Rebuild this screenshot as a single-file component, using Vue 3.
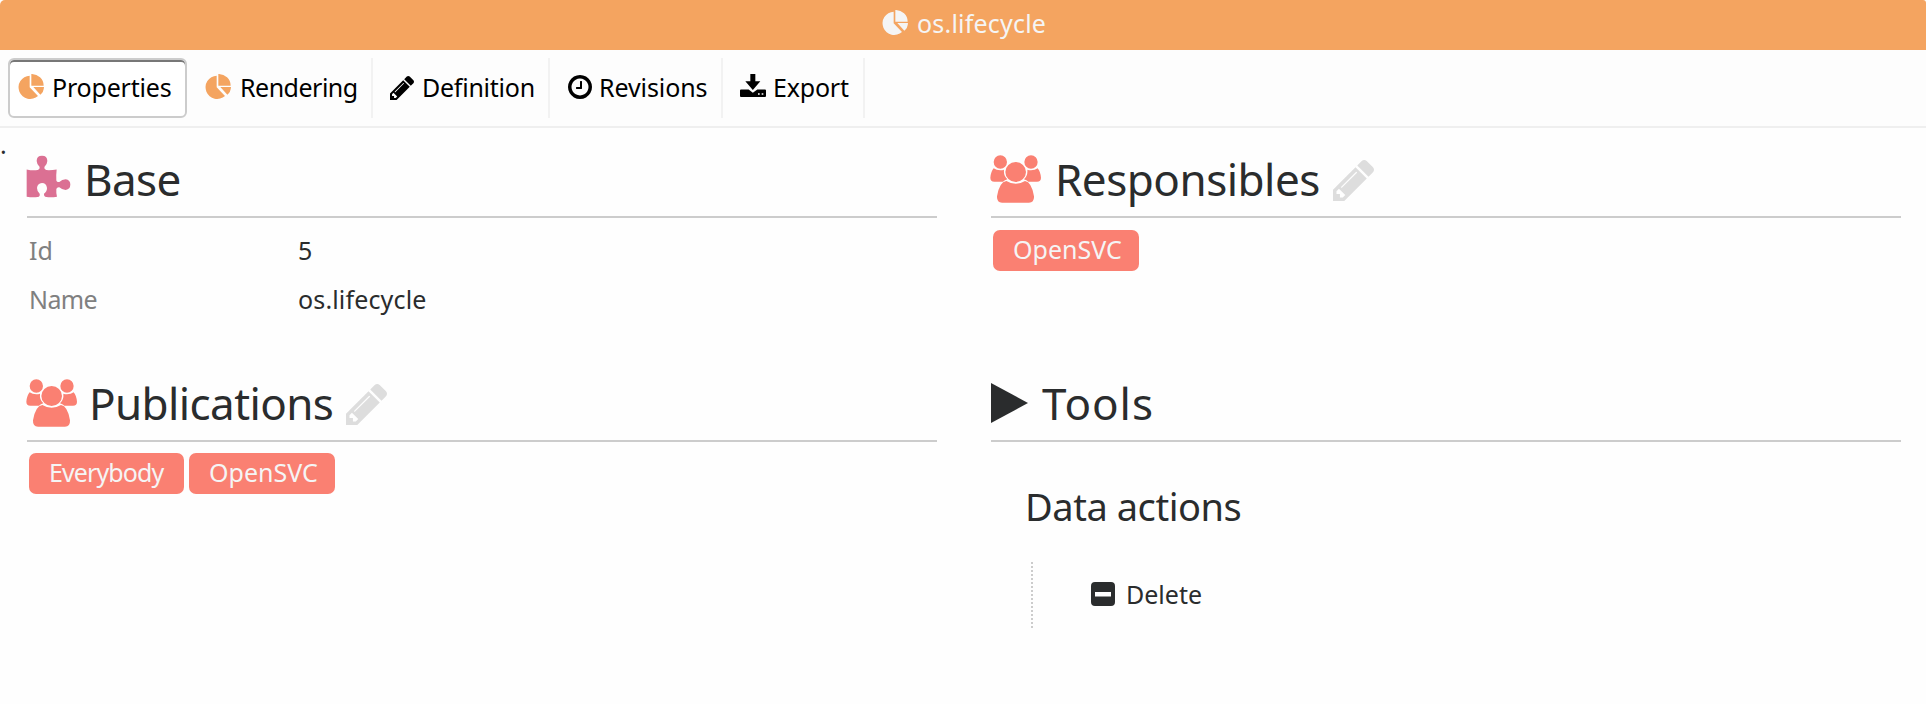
<script setup>
import { h } from 'vue'

const shapes = {
  pie: {
    box: '0 0 78 75',
    d: 'M35 5V40L60 66A35 35 0 1 1 35 5ZM40 0A36 35 0 0 1 77 35H40ZM46 39H78Q77 55 67 62Z',
  },
  pencil: {
    box: '128 149 1515 1515',
    d: 'M491 1536l91-91-235-235-91 91v107h128v128h107zm523-928q0-22-22-22-10 0-17 7l-542 542q-7 7-7 17 0 22 22 22 10 0 17-7l542-542q7-7 7-17zm-54-192l416 416-832 832h-416v-416zm683 96q0 53-37 90l-166 166-416-416 166-165q36-38 90-38 53 0 91 38l235 234q37 39 37 91z',
  },
  clock: {
    box: '128 128 1536 1536',
    d: 'M1024 544v448q0 14-9 23t-23 9h-320q-14 0-23-9t-9-23v-64q0-14 9-23t23-9h224v-352q0-14 9-23t23-9h64q14 0 23 9t9 23zm416 352q0-148-73-273t-198-198-273-73-273 73-198 198-73 273 73 273 198 198 273 73 273-73 198-198 73-273zm224 0q0 209-103 385.5t-279.5 279.5-385.5 103-385.5-103-279.5-279.5-103-385.5 103-385.5 279.5-279.5 385.5-103 385.5 103 279.5 279.5 103 385.5z',
  },
  download: {
    box: '0 0 78 70',
    d: 'M31 0H46V22H61L38.500 49L16 22H31ZM3 47H26L38.500 57L52 47H75Q78 47 78 50V67Q78 70 75 70H3Q0 70 0 67V50Q0 47 3 47ZM54 58.500V63.500H59V58.500ZM65 58.500V63.500H70V58.500Z',
  },
  puzzle: {
    box: '78 465 135 128',
    d: 'M80 508Q96 512 113 510Q120 508 119 501Q110 492 110 483Q110 467 126 467Q142 467 142 483Q142 492 133 501Q132 508 139 510Q154 511 170 508Q168 524 169 541Q171 547 178 545Q186 537 197 537Q211 539 211 553Q211 567 197 569Q187 569 178 561Q171 560 169 566Q168 578 171 589Q154 592 139 590Q131 588 132 580Q141 574 141 563Q139 548 126 548Q112 549 111 563Q111 573 119 580Q121 588 113 590Q97 592 80 589Z',
  },
  group: {
    box: '79 58 153 144',
    d: 'M110 59A20 20 0 1 0 110 99A20 20 0 1 0 110 59ZM202 59A20 20 0 1 0 202 99A20 20 0 1 0 202 59ZM156 79A31 30 0 1 0 156 139A31 30 0 1 0 156 79ZM90 98Q98 104 110 104Q116 104 121 102Q119 120 131 131Q123 133 118 138H92Q80 138 80 126Q82 107 90 98ZM222 98Q214 104 202 104Q196 104 191 102Q193 120 181 131Q189 133 194 138H220Q232 138 232 126Q230 107 222 98ZM128 136Q141 144 156 144Q171 144 184 136Q204 139 211 182Q212 201 196 201H115Q99 201 100 182Q107 139 128 136Z',
  },
  play: { box: '0 0 37 40', d: 'M0 0L37 20L0 40Z' },
  minus: {
    box: '0 0 24 24',
    d: 'M4 0H20Q24 0 24 4V20Q24 24 20 24H4Q0 24 0 20V4Q0 0 4 0ZM4 10V14.500H20V10Z',
  },
}

const Icon = (props) =>
  h('svg', { viewBox: shapes[props.name].box, preserveAspectRatio: 'none', fill: 'currentColor', 'fill-rule': 'evenodd' }, [
    h('path', { d: shapes[props.name].d }),
  ])
Icon.props = ['name']

const tabs = [
  { label: 'Rendering', icon: 'pie', key: 'rendering' },
  { label: 'Definition', icon: 'pencil', key: 'definition' },
  { label: 'Revisions', icon: 'clock', key: 'revisions' },
  { label: 'Export', icon: 'download', key: 'export' },
]
</script>

<template>
  <div class="page">
    <header class="title">
      <Icon name="pie" class="pie" /><span class="title-text">os.lifecycle</span>
    </header>
    <nav class="tabs">
      <button class="tab active"><Icon name="pie" class="pie" /><span class="properties">Properties</span></button>
      <button v-for="t in tabs" :key="t.key" class="tab" :class="'tab-' + t.key">
        <Icon :name="t.icon" :class="t.icon" /><span :class="t.key">{{ t.label }}</span>
      </button>
    </nav>
    <span class="dot">.</span>
    <main class="grid">
      <section>
        <h2><Icon name="puzzle" class="puzzle" /><span class="base">Base</span></h2>
        <dl>
          <dt>Id</dt><dd>5</dd>
          <dt class="key-name">Name</dt><dd class="value-name">os.lifecycle</dd>
        </dl>
      </section>
      <section>
        <h2><Icon name="group" class="group" /><span class="responsibles">Responsibles</span><Icon name="pencil" class="edit" /></h2>
        <div class="tags upper"><span class="tag opensvc">OpenSVC</span></div>
      </section>
      <section>
        <h2><Icon name="group" class="group" /><span class="publications">Publications</span><Icon name="pencil" class="edit" /></h2>
        <div class="tags"><span class="tag everybody">Everybody</span><span class="tag opensvc">OpenSVC</span></div>
      </section>
      <section>
        <h2><Icon name="play" class="play" /><span class="tools">Tools</span></h2>
        <h3>Data actions</h3>
        <div class="actions"><Icon name="minus" class="minus" /><span class="delete">Delete</span></div>
      </section>
    </main>
  </div>
</template>

<style>
body {
  background: #fefefe;
}
</style>

<style scoped>
.page {
  position: relative;
  height: 704px;
  overflow: hidden;
  font: 25px/36px "Noto Sans", sans-serif;
  color: #2a2c2d;
  background: #fefefe;
}
svg {
  display: block;
  flex: none;
}
span {
  white-space: nowrap;
}
.title {
  display: flex;
  height: 50px;
  box-sizing: border-box;
  padding-left: 882px;
  border-radius: 5px 3px 0 0;
  background: #f4a460;
  color: #f5f5f5;
}
.pie {
  width: 26px;
  height: 25px;
}
.title .pie {
  margin-top: 10px;
}
.title-text {
  margin: 5px 0 0 9px;
  letter-spacing: 0.2px;
}
.tabs {
  display: flex;
  height: 78px;
  box-sizing: border-box;
  padding: 8px 0 0 8px;
  border-bottom: 2px solid #efefef;
  background: #fdfdfd;
}
.tab {
  display: flex;
  height: 60px;
  box-sizing: border-box;
  padding: 11px 0 0;
  border: 0;
  border-right: 2px solid #f2f2f2;
  background: none;
  font: inherit;
  color: #000;
  text-align: left;
}
.tab .pie {
  margin-top: 5px;
  color: #f4a460;
}
.active {
  width: 179px;
  padding: 9px 0 0 8px;
  border: 2px solid #ccc;
  border-radius: 6px;
  background: #fff;
  box-shadow: inset 0 2px 0 #777;
}
.properties {
  margin-left: 8px;
  letter-spacing: -0.2px;
}
.tab-rendering {
  width: 186px;
  padding-left: 18px;
}
.rendering {
  margin-left: 9px;
  letter-spacing: -0.5px;
}
.tab-definition {
  width: 177px;
  padding-left: 17px;
}
.pencil {
  width: 24px;
  height: 24px;
  margin-top: 7px;
}
.definition {
  margin-left: 8px;
  letter-spacing: -0.25px;
}
.tab-revisions {
  width: 173px;
  padding-left: 18px;
}
.clock {
  width: 24px;
  height: 24px;
  margin-top: 6px;
}
.revisions {
  margin-left: 7px;
  letter-spacing: -0.1px;
}
.tab-export {
  width: 142px;
  padding-left: 17px;
}
.download {
  width: 26px;
  height: 23px;
  margin-top: 5px;
}
.export {
  margin-left: 7px;
  letter-spacing: -0.2px;
}
.dot {
  position: absolute;
  left: 0;
  top: 126px;
}
.grid {
  display: grid;
  grid-template-columns: 910px 910px;
  grid-template-rows: 224px 300px;
  column-gap: 54px;
  padding: 22px 0 0 27px;
}
h2 {
  display: flex;
  height: 68px;
  box-sizing: border-box;
  margin: 0;
  border-bottom: 2px solid #ccc;
  font-size: 44px;
  line-height: 58px;
  font-weight: 400;
}
.puzzle {
  width: 45px;
  height: 43px;
  margin: 5px 0 0 -1px;
  color: #db7093;
}
.base {
  margin-left: 13px;
  letter-spacing: -0.6px;
}
.group {
  width: 51px;
  height: 48px;
  margin: 5px 0 0 -1px;
  color: #fa8072;
}
.responsibles {
  margin-left: 14px;
  letter-spacing: -0.5px;
}
.publications {
  margin-left: 12px;
  letter-spacing: -0.6px;
}
.edit {
  width: 41px;
  height: 41px;
  margin: 10px 0 0 13px;
  color: #ddd;
}
.play {
  width: 37px;
  height: 40px;
  margin-top: 9px;
}
.tools {
  margin-left: 14px;
  letter-spacing: 1px;
}
dl {
  display: grid;
  grid-template-columns: 269px auto;
  grid-auto-rows: 49px;
  margin: 0;
  padding: 14px 0 0 2px;
}
dt {
  color: #808080;
}
dd {
  margin: 0;
}
.key-name {
  letter-spacing: -0.6px;
}
.value-name {
  letter-spacing: 0.15px;
}
.tags {
  display: flex;
  gap: 5px;
  padding: 11px 0 0 2px;
}
.upper {
  padding-top: 12px;
}
.tag {
  height: 41px;
  box-sizing: border-box;
  padding: 1px 0 0 20px;
  border-radius: 7px;
  background: #fa8072;
  color: #f5f5f5;
}
.opensvc {
  width: 146px;
}
.everybody {
  width: 155px;
  letter-spacing: -0.9px;
}
h3 {
  margin: 39px 0 0 34px;
  font-size: 38px;
  line-height: 50px;
  font-weight: 400;
  letter-spacing: -0.45px;
}
.actions {
  display: flex;
  height: 66px;
  box-sizing: border-box;
  margin: 31px 0 0 40px;
  padding: 14px 0 0 58px;
  border-left: 2px dotted #ccc;
}
.minus {
  width: 24px;
  height: 24px;
  margin-top: 6px;
}
.delete {
  margin-left: 11px;
}
</style>
